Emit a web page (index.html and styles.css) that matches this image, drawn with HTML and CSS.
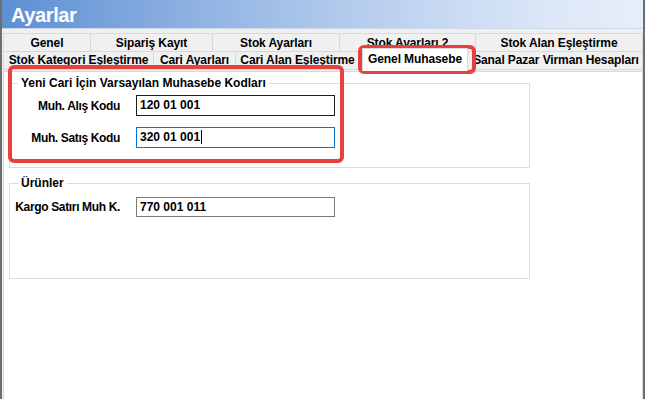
FILE: index.html
```html
<!DOCTYPE html>
<html lang="tr">
<head>
    <meta charset="UTF-8">
    <meta name="viewport" content="width=device-width, initial-scale=1.0">
    <title>Ayarlar</title>
    <link rel="stylesheet" href="styles.css">
</head>
<body>
    <div class="window">
        <!-- Title bar -->
        <div class="titlebar">Ayarlar</div>

        <!-- Tabs -->
        <div class="tabs">
            <div class="tab-row">
                <div class="tab" style="width: 88px">Genel</div>
                <div class="tab" style="width: 122px">Sipariş Kayıt</div>
                <div class="tab" style="width: 127px">Stok Ayarları</div>
                <div class="tab" style="width: 136px">Stok Ayarları 2</div>
                <div class="tab tab-fill">Stok Alan Eşleştirme</div>
            </div>
            <div class="tab-row">
                <div class="tab" style="width: 151px">Stok Kategori Eşleştirme</div>
                <div class="tab" style="width: 82px">Cari Ayarları</div>
                <div class="tab" style="width: 124px">Cari Alan Eşleştirme</div>
                <div class="tab active" style="width: 106px">Genel Muhasebe</div>
                <div class="tab tab-fill">Sanal Pazar Virman Hesapları</div>
            </div>
        </div>

        <!-- Tab page -->
        <div class="panel">
            <fieldset class="group group-first">
                <legend>Yeni Cari İçin Varsayılan Muhasebe Kodları</legend>
                <div class="form-row">
                    <label>Muh. Alış Kodu</label>
                    <div class="field">120 01 001</div>
                </div>
                <div class="form-row">
                    <label>Muh. Satış Kodu</label>
                    <div class="field focus">320 01 001<span class="caret"></span></div>
                </div>
            </fieldset>

            <fieldset class="group group-second">
                <legend>Ürünler</legend>
                <div class="form-row">
                    <label>Kargo Satırı Muh K.</label>
                    <div class="field muted">770 001 011</div>
                </div>
            </fieldset>
        </div>

        <!-- Red highlight marks -->
        <div class="mark mark-tab"></div>
        <div class="mark mark-group"></div>
    </div>
</body>
</html>
```

FILE: styles.css
```css
body {
    margin: 0;
    font-family: "Liberation Sans", Arial, sans-serif;
    background-color: #ffffff;
    color: #000;
}
.window {
    position: relative;
    width: 645px;
    height: 399px;
    box-sizing: border-box;
    border-left: 2px solid #6e6e6e;
    border-right: 2px solid #6e6e6e;
    background-color: #f0f0f0;
    overflow: hidden;
    display: flex;
    flex-direction: column;
}

/* Title bar */
.titlebar {
    height: 28px;
    padding-left: 9px;
    background: linear-gradient(to right, #5d8fd3 0%, #8fb2e2 30%, #bcd1ef 60%, #dce7f7 85%, #e6eef9 100%);
    color: #fff;
    font-size: 20px;
    font-weight: bold;
    letter-spacing: -0.4px;
    line-height: 30px;
    border-bottom: 1px solid #c9d6e8;
}

/* Tabs */
.tabs {
    margin-top: 4px;
    padding-left: 1px;
}
.tab-row {
    display: flex;
    height: 19px;
}
.tab {
    box-sizing: border-box;
    border: 1px solid #d9d9d9;
    border-left: none;
    background-color: #f0f0f0;
    font-size: 12px;
    font-weight: bold;
    letter-spacing: -0.1px;
    text-align: center;
    line-height: 18px;
    white-space: nowrap;
    overflow: hidden;
}
.tab:first-child {
    border-left: 1px solid #d9d9d9;
}
.tab-fill {
    flex: 1;
}
.tab-row + .tab-row .tab {
    border-top: none;
    height: 18px;
    line-height: 17px;
}
.tab-row + .tab-row .tab.active {
    position: relative;
    z-index: 1;
    height: 23px;
    margin: -4px 2px 0 2px;
    border: 1px solid #d9d9d9;
    border-bottom: none;
    background-color: #fff;
    line-height: 20px;
}

/* Tab page */
.panel {
    flex: 1;
    background-color: #fff;
    border: 1px solid #d9d9d9;
    border-bottom: none;
    margin-left: 1px;
    padding: 4px 112px 0 5px;
}
.group {
    margin: 0;
    padding: 0 0 0 1px;
    border: 1px solid #dcdcdc;
}
.group legend {
    margin-left: 7px;
    padding: 0 3px;
    font-size: 12px;
    font-weight: bold;
    line-height: 14px;
}
.group-first {
    padding-top: 5px;
    padding-bottom: 19px;
}
.group-second {
    margin-top: 8px;
    padding-top: 7px;
    height: 103px;
    box-sizing: border-box;
}
.form-row {
    display: grid;
    grid-template-columns: 109px 199px;
    column-gap: 16px;
    align-items: center;
    margin-bottom: 11px;
}
.form-row:last-child {
    margin-bottom: 0;
}
.form-row label {
    text-align: right;
    font-size: 12px;
    font-weight: bold;
    letter-spacing: -0.35px;
}
.field {
    box-sizing: border-box;
    height: 21px;
    padding-left: 3px;
    border: 1px solid #1e1e1e;
    font-size: 12px;
    font-weight: bold;
    line-height: 19px;
}
.field.focus {
    border-color: #0078d7;
}
.field.muted {
    height: 20px;
    border-color: #7a7a7a;
    line-height: 18px;
}
.caret {
    display: inline-block;
    width: 1px;
    height: 14px;
    margin-left: 1px;
    vertical-align: -3px;
    background-color: #000;
}

/* Red highlight marks drawn over the form */
.mark {
    position: absolute;
    border: 4px solid #e8403f;
    border-radius: 6px;
    box-sizing: border-box;
}
.mark-tab {
    left: 356px;
    top: 45px;
    width: 118px;
    height: 29px;
}
.mark-group {
    left: 6px;
    top: 65px;
    width: 336px;
    height: 98px;
}
```
